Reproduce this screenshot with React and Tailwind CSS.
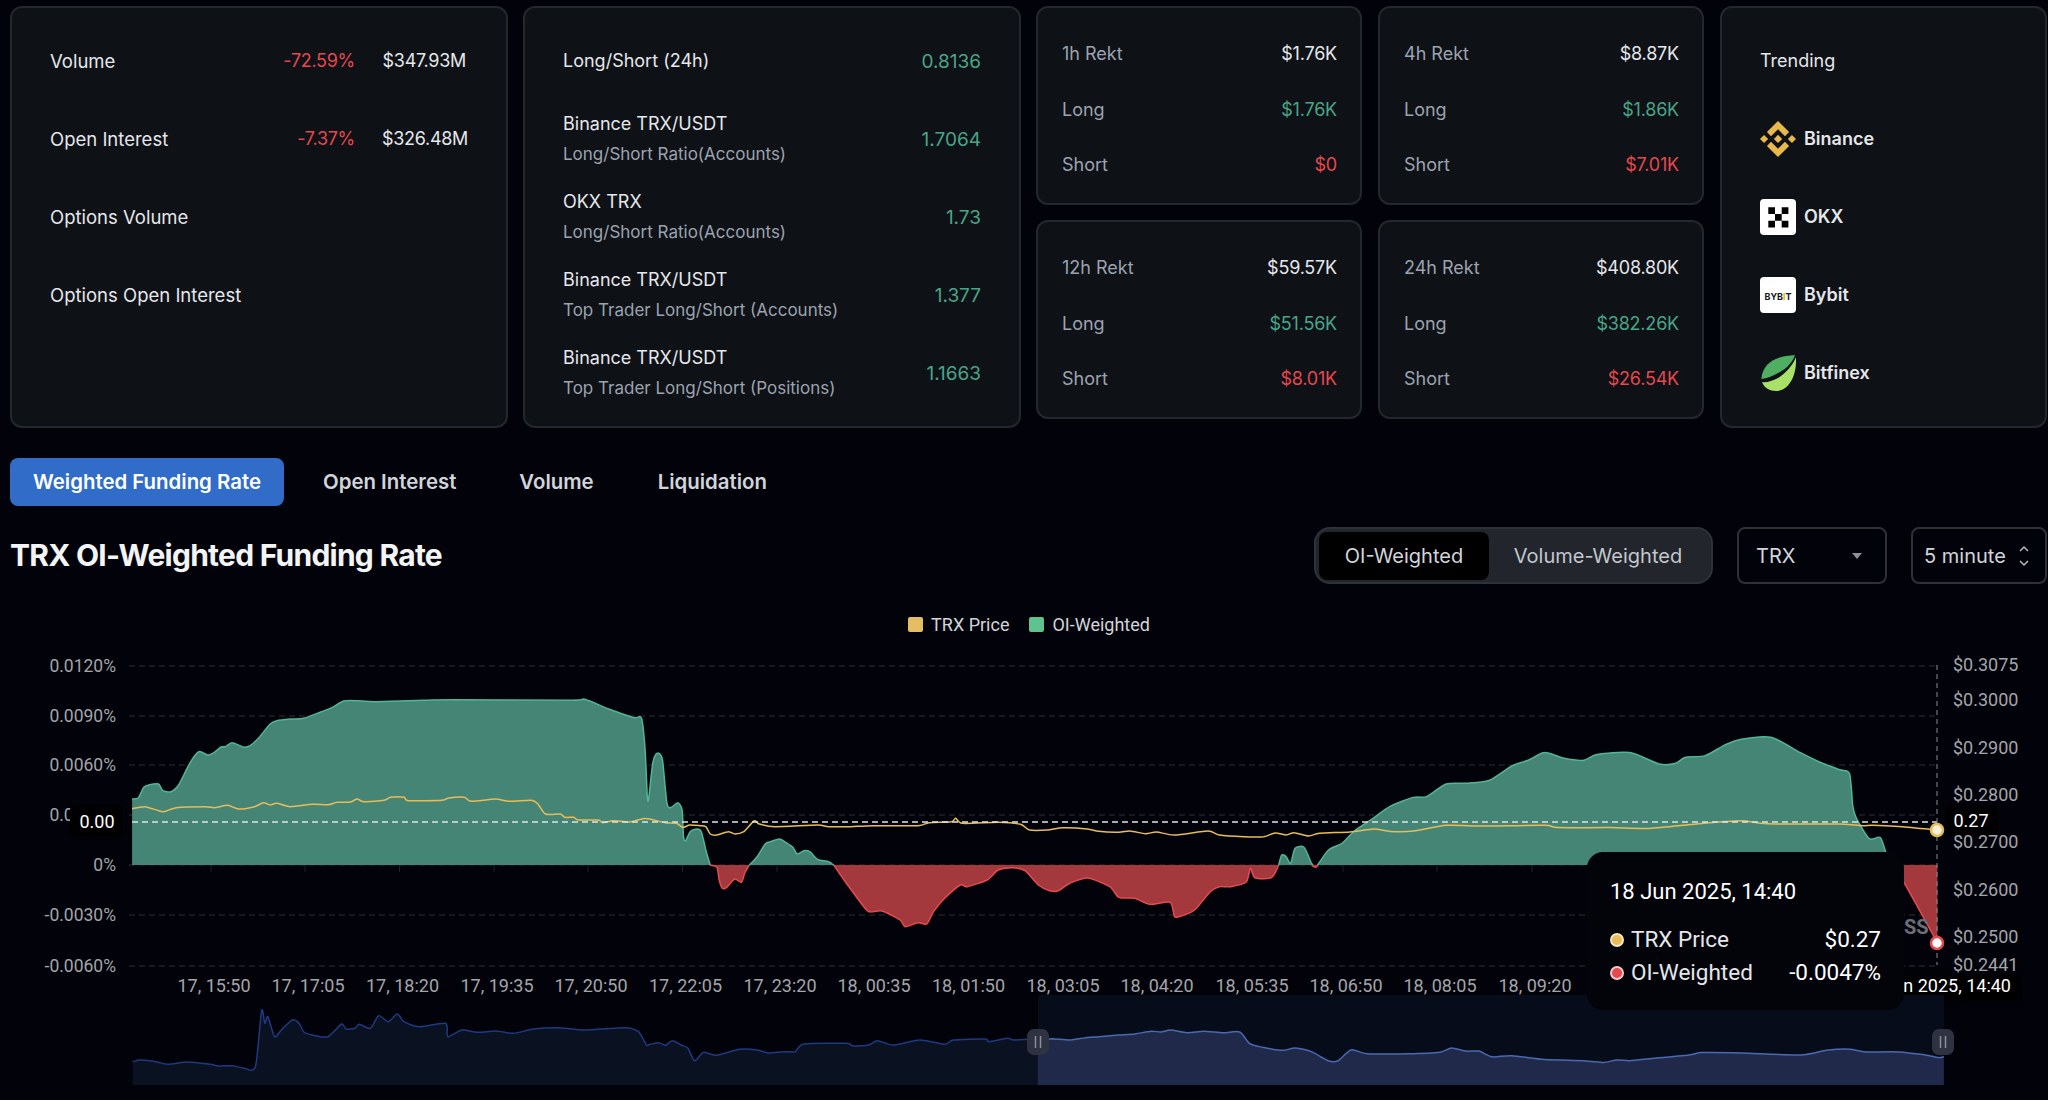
import React from "react";

const z5 = ([x, y]) => [x / 2.24, 650 + y / 3];
const z6 = ([x, y]) => [650 + x / 2.24, 650 + y / 3];
const z4 = ([x, y]) => [1020 + x / 1.525, 500 + y / 2.613];

const smooth = (pts) => {
  let d = `M${pts[0][0].toFixed(1)} ${pts[0][1].toFixed(1)}`;
  for (let i = 0; i < pts.length - 1; i++) {
    const p0 = pts[i - 1] || pts[i];
    const p1 = pts[i];
    const p2 = pts[i + 1];
    const p3 = pts[i + 2] || p2;
    const c1x = p1[0] + (p2[0] - p0[0]) / 8;
    const c1y = p1[1] + (p2[1] - p0[1]) / 8;
    const c2x = p2[0] - (p3[0] - p1[0]) / 8;
    const c2y = p2[1] - (p3[1] - p1[1]) / 8;
    d += `C${c1x.toFixed(1)} ${c1y.toFixed(1)} ${c2x.toFixed(1)} ${c2y.toFixed(1)} ${p2[0].toFixed(1)} ${p2[1].toFixed(1)}`;
  }
  return d;
};

const area = (pts, base) => `${smooth(pts)}L${pts[pts.length - 1][0].toFixed(1)} ${base}L${pts[0][0].toFixed(1)} ${base}Z`;

const green1 = [
  ...[[296,447],[310,443],[322,412],[335,404],[355,402],[365,422],[383,425],[400,405],[425,340],[445,305],[465,315],[480,307],[495,291],[505,290],[520,278],[545,291],[560,287],[580,263],[605,222],[620,212],[650,207],[680,205],[720,185],[745,172],[770,153],[800,152],[840,155],[950,151],[1015,149],[1280,151],[1310,148],[1365,178],[1420,203],[1437,205],[1445,300],[1450,440],[1453,445]].map(z5),
  ...[[6,340],[12,315],[20,310],[28,330],[38,460],[48,472],[62,458],[72,480],[75,560],[80,572],[90,545],[105,537],[115,545],[125,600],[135,646]].map(z6),
];
const red1 = [[135,646],[150,652],[155,690],[162,715],[172,712],[190,687],[205,697],[212,670],[222,646]].map(z6);
const green2 = [[222,646],[240,620],[258,582],[270,575],[290,567],[305,578],[320,592],[330,612],[345,602],[358,605],[375,628],[400,635],[412,646]].map(z6);
const red2 = [[412,646],[440,700],[485,780],[500,785],[520,783],[560,810],[572,830],[600,818],[620,822],[635,785],[660,745],[695,705],[710,710],[755,690],[780,660],[812,653],[840,662],[870,705],[895,722],[915,722],[940,700],[980,684],[1030,710],[1050,742],[1085,745],[1120,763],[1165,757],[1175,800],[1190,798],[1220,780],[1255,725],[1275,710],[1300,710],[1335,697],[1345,655],[1355,683],[1392,683],[1408,646]].map(z6);
const green3 = [[1408,646],[1415,615],[1425,620],[1435,640],[1445,595],[1465,592],[1480,635],[1485,646]].map(z6);
const red4 = [[1482,646],[1490,652],[1497,646]].map(z6);
const green4 = [
  ...[[1495,646],[1520,600],[1550,580]].map(z6),
  ...[[510,865],[540,830],[565,800],[600,777],[620,775],[650,742],[680,740],[715,733],[750,695],[775,680],[800,660],[830,675],[860,680],[880,665],[930,660],[975,690],[1000,688],[1015,672],[1045,668],[1075,640],[1100,625],[1145,620],[1190,660],[1220,685],[1250,705],[1265,715],[1270,800],[1275,830],[1295,885],[1312,882],[1322,930],[1328,955]].map(z4),
];
const red3 = [[1330,955],[1350,1005],[1399,1157]].map(z4);

const price = [
  ...[[296,476],[325,470],[365,485],[395,473],[460,470],[480,473],[510,466],[535,477],[570,470],[590,458],[605,465],[620,460],[650,470],[700,463],[735,464],[755,457],[785,456],[800,447],[815,455],[860,451],[875,442],[905,442],[915,452],[990,451],[1005,444],[1040,442],[1055,454],[1110,447],[1140,454],[1190,451],[1205,462],[1222,492],[1255,492],[1265,502],[1285,502],[1295,510],[1340,510],[1350,518],[1375,512],[1410,516],[1440,506],[1455,507],[1490,518],[1515,520],[1530,532],[1545,525],[1568,527]].map(z5),
  ...[[125,530],[135,552],[150,555],[175,545],[190,552],[210,545],[233,513],[245,522],[280,530],[375,525],[400,530],[450,530],[500,527],[600,527],[625,518],[675,515],[685,505],[700,520],[780,517],[830,523],[850,540],[890,540],[925,533],[980,537],[1005,544],[1050,547],[1075,543],[1110,551],[1135,546],[1175,555],[1250,543],[1275,555],[1330,560],[1375,560],[1400,549],[1425,555],[1443,548],[1475,558],[1500,550],[1568,546]].map(z6),
  ...[[540,860],[565,866],[600,865],[650,850],[700,852],[800,850],[820,856],[900,856],[960,858],[1040,845],[1100,838],[1140,846],[1250,847],[1285,851],[1300,850],[1340,853],[1399,862]].map(z4),
];

const miniLeft = [
  ...[[297,1235],[315,1230],[350,1235],[375,1243],[420,1236],[470,1243],[490,1248],[520,1247],[545,1254],[572,1250],[586,1082],[593,1120],[600,1100],[615,1160],[630,1140],[655,1110],[670,1120],[680,1145],[700,1155],[735,1160],[765,1122],[775,1137],[795,1135],[805,1123],[830,1135],[848,1097],[870,1115],[890,1092],[905,1115],[940,1130],[998,1120],[1003,1160],[1035,1140],[1070,1147],[1110,1143],[1150,1150],[1195,1137],[1250,1133],[1310,1140],[1400,1133],[1430,1145],[1448,1185]].map(z5),
  ...[[0,1183],[20,1178],[35,1186],[50,1172],[70,1185],[85,1195],[100,1232],[120,1207],[148,1216],[200,1198],[240,1200],[265,1209],[300,1205],[325,1205],[345,1182],[440,1180],[455,1188],[490,1185],[510,1172],[545,1185],[605,1170],[660,1183],[680,1170],[750,1167],[760,1175],[800,1165],[815,1170],[850,1168],[869,1168]].map(z6),
];
const miniRight = [[27,1410],[50,1408],[75,1411],[100,1405],[125,1402],[150,1398],[175,1395],[200,1388],[215,1390],[230,1385],[255,1392],[280,1388],[310,1392],[335,1390],[350,1420],[370,1430],[400,1438],[420,1432],[445,1442],[470,1465],[485,1465],[505,1437],[530,1447],[590,1447],[640,1443],[658,1432],[680,1440],[700,1440],[720,1455],[750,1452],[800,1462],[860,1465],[890,1470],[910,1463],[930,1465],[960,1460],[1020,1450],[1040,1444],[1100,1445],[1190,1450],[1230,1438],[1265,1435],[1290,1442],[1340,1442],[1380,1450],[1400,1457],[1409,1455]].map(z4);

const leftAxis = [["0.0120%", 666], ["0.0090%", 716], ["0.0060%", 765], ["0.0030%", 815], ["0%", 865], ["-0.0030%", 915], ["-0.0060%", 966]];
const rightAxis = [["$0.3075", 665], ["$0.3000", 700], ["$0.2900", 748], ["$0.2800", 795], ["$0.2700", 842], ["$0.2600", 890], ["$0.2500", 937], ["$0.2441", 965]];
const timeLabels = [["17, 15:50", 214], ["17, 17:05", 308], ["17, 18:20", 402.5], ["17, 19:35", 497], ["17, 20:50", 591], ["17, 22:05", 685.5], ["17, 23:20", 780], ["18, 00:35", 874], ["18, 01:50", 968.5], ["18, 03:05", 1063], ["18, 04:20", 1157], ["18, 05:35", 1252], ["18, 06:50", 1346], ["18, 08:05", 1440], ["18, 09:20", 1535]];

const Card = ({ className, children }) => (
  <div className={`rounded-xl border-2 border-[#23272e] bg-[#0e1116] ${className}`}>{children}</div>
);

const Row = ({ label, pct, value }) => (
  <div className="flex h-[78px] items-center justify-between">
    <span className="text-[18.5px] leading-6 text-[#e5e7eb]">{label}</span>
    <div className="flex gap-[27px] leading-6 tracking-[-0.3px]">
      {pct && <span className="text-[#e5484d]">{pct}</span>}
      {value && <span className="w-[84px] text-right text-[#e5e7eb]">{value}</span>}
    </div>
  </div>
);

const RatioRow = ({ title, sub, value }) => (
  <div className="flex h-[78px] items-center justify-between">
    <div className="flex flex-col gap-[6px]">
      <span className="leading-6 text-[#e5e7eb]">{title}</span>
      {sub && <span className="text-[17px] leading-6 text-[#9ca3af]">{sub}</span>}
    </div>
    <span className="mt-[3px] text-[19px] text-[#4aa587]">{value}</span>
  </div>
);

const RektCard = ({ title, total, long, short }) => (
  <Card className="h-[199px] pl-6 pr-[23px] pt-[18px]">
    {[
      [title, total, "text-[#9ca3af]", "text-[#e5e7eb]"],
      ["Long", long, "text-[#9ca3af]", "text-[#4aa587]"],
      ["Short", short, "text-[#9ca3af]", "text-[#e5484d]"],
    ].map(([a, b, ca, cb]) => (
      <div key={a} className="flex h-[55.5px] items-center justify-between">
        <span className={ca}>{a}</span>
        <span className={`tracking-[-0.2px] ${cb}`}>{b}</span>
      </div>
    ))}
  </Card>
);

const BinanceLogo = () => (
  <svg width="36" height="36" viewBox="0 0 126.61 126.61" fill="#e8b84a">
    <path d="M38.73 53.2l24.59-24.58 24.6 24.6 14.3-14.31L63.32 0 24.42 38.9l14.31 14.3zM0 63.31l14.3-14.31 14.31 14.31-14.31 14.3zM38.73 73.41l24.59 24.59 24.6-24.6 14.31 14.29-38.9 38.91-38.91-38.88-.02-.02zM98 63.31l14.3-14.31 14.31 14.3-14.31 14.32z" />
    <path d="M77.83 63.3L63.32 48.78 52.59 59.51l-1.24 1.23-2.54 2.54 14.51 14.5 14.51-14.47z" />
  </svg>
);

const OkxLogo = () => (
  <svg width="36" height="36" viewBox="0 0 36 36">
    <rect width="36" height="36" rx="4" fill="#fff" />
    <path d="M8.3 8.3h6.7V15H8.3zM21.7 8.3h6.7V15h-6.7zM15 15h6.7v6.7H15zM8.3 21.7h6.7v6.7H8.3zM21.7 21.7h6.7v6.7h-6.7z" fill="#000" />
  </svg>
);

const BybitLogo = () => (
  <svg width="36" height="36" viewBox="0 0 36 36">
    <rect width="36" height="36" rx="4" fill="#fff" />
    <text x="18" y="23" textAnchor="middle" fontSize="9" fontWeight="700" fontFamily="Inter, sans-serif" fill="#15171c">
      BYB<tspan fill="#f7a600">I</tspan>T
    </text>
  </svg>
);

const BitfinexLogo = () => (
  <svg width="36" height="36" viewBox="0 0 36 36">
    <path d="M35 0C20 1 3 5 1.3 24C9 23 20 18 27 12C31 8 34 4 35 0Z" fill="#4fae62" />
    <path d="M36 2C33 10 26 18 18 23C12 26 6 28 2 27C4 33 10 36 16 36C28 36 37 22 36 2Z" fill="#a8e068" />
  </svg>
);

const Chart = () => (
  <svg className="block" width="2048" height="460" viewBox="0 640 2048 460" fontFamily="Roboto, sans-serif">
    {leftAxis.map(([, y]) => (
      <line key={y} x1="129" x2="1938" y1={y} y2={y} stroke="#202226" strokeWidth="1.5" strokeDasharray="6 4" />
    ))}
    {timeLabels.map(([, x]) => (
      <line key={x} x1={x - 3} x2={x - 3} y1="865" y2="872" stroke="#1e2024" strokeWidth="1" />
    ))}

    {[green1, green2, green3, green4].map((p, i) => (
      <g key={i}>
        <path d={area(p, 865)} fill="#458576" />
        <path d={smooth(p)} fill="none" stroke="#52b595" strokeWidth="1.5" />
      </g>
    ))}
    {[red1, red2, red4, red3].map((p, i) => (
      <g key={i}>
        <path d={area(p, 865)} fill="#a3383d" />
        <path d={smooth(p)} fill="none" stroke="#e8494f" strokeWidth="1.5" />
      </g>
    ))}
    <path d={smooth(price)} fill="none" stroke="#e8bd58" strokeWidth="1.5" />

    <line x1="132" x2="1937" y1="822" y2="822" stroke="#dfe3e8" strokeWidth="1.5" strokeDasharray="6 4" />
    <line x1="1937" x2="1937" y1="665" y2="965" stroke="#8a8d93" strokeWidth="1" strokeDasharray="5 4" />

    {leftAxis.map(([t, y]) => (
      <text key={t} x="116" y={y + 6} textAnchor="end" fontSize="17.5" fill="#a3a5a9">{t}</text>
    ))}
    {rightAxis.map(([t, y]) => (
      <text key={t} x="1953" y={y + 6} fontSize="18" fill="#a3a5a9">{t}</text>
    ))}
    {timeLabels.map(([t, x]) => (
      <text key={t} x={x} y="992" textAnchor="middle" fontSize="18" fill="#a3a5a9">{t}</text>
    ))}

    <rect x="70" y="805" width="53" height="32" rx="5" fill="#000" />
    <text x="97" y="828" textAnchor="middle" fontSize="18" fill="#fff">0.00</text>
    <rect x="1945" y="806" width="53" height="29" rx="4" fill="#000" />
    <text x="1971" y="827" textAnchor="middle" fontSize="18" fill="#fff">0.27</text>
    <rect x="1870" y="975" width="152" height="26" fill="#000" />
    <text x="2011" y="992" textAnchor="end" fontSize="18" fill="#fff">18 Jun 2025, 14:40</text>
    <text x="1904" y="934" fontSize="20" fontWeight="700" fill="#6b7078">SS</text>

    <circle cx="1937" cy="830" r="6" fill="#fbf3d9" stroke="#e8bd58" strokeWidth="2.5" />
    <circle cx="1937" cy="943" r="6" fill="#fff" stroke="#e5484d" strokeWidth="2.5" />

    <path d={area(miniLeft, 1085)} fill="#0a1120" />
    <path d={smooth(miniLeft)} fill="none" stroke="#1f3a80" strokeWidth="1.5" />
    <rect x="1038" y="995" width="906" height="90" fill="#070c1a" />
    <path d={area(miniRight, 1085)} fill="#20294a" />
    <path d={smooth(miniRight)} fill="none" stroke="#4a69b0" strokeWidth="1.5" />
    {[1038, 1943].map((x) => (
      <g key={x}>
        <rect x={x - 11} y="1029" width="22" height="26" rx="7" fill="#2f3240" />
        <line x1={x - 2.5} x2={x - 2.5} y1="1036" y2="1048" stroke="#8a8f9c" strokeWidth="1.5" />
        <line x1={x + 2.5} x2={x + 2.5} y1="1036" y2="1048" stroke="#8a8f9c" strokeWidth="1.5" />
      </g>
    ))}
  </svg>
);

const Tooltip = () => (
  <div className="absolute left-[1587px] top-[212px] h-[158px] w-[317px] rounded-2xl bg-[#03040a] px-[23px] pt-[26px] font-['Roboto',sans-serif] text-[22.5px] text-[#e5e7eb]">
    <div className="text-[22px] leading-7 text-white">18 Jun 2025, 14:40</div>
    <div className="mt-5 flex h-7 items-center justify-between">
      <span className="flex items-center gap-[7px]">
        <span className="h-[14px] w-[14px] rounded-full border-2 border-[#f3e6bd] bg-[#e8bd58]"></span>
        TRX Price
      </span>
      <span className="text-white">$0.27</span>
    </div>
    <div className="mt-[5px] flex h-7 items-center justify-between">
      <span className="flex items-center gap-[7px]">
        <span className="h-[14px] w-[14px] rounded-full border-2 border-[#f3c6c8] bg-[#e5484d]"></span>
        OI-Weighted
      </span>
      <span className="text-white">-0.0047%</span>
    </div>
  </div>
);

const App = () => {
  return (
    <div className="h-[1100px] w-[2048px] overflow-hidden bg-[#02030a] font-['Inter',sans-serif] text-[18px]">
      {/* top cards */}
      <div className="flex items-start gap-4 pl-2.5 pt-1.5">
        <Card className="h-[422px] w-[498px] pl-[38px] pr-[40px] py-[14px]">
          <Row label="Volume" pct="-72.59%" value="$347.93M" />
          <Row label="Open Interest" pct="-7.37%" value="$326.48M" />
          <Row label="Options Volume" />
          <Row label="Options Open Interest" />
        </Card>

        <Card className="-ml-px h-[422px] w-[498px] px-[38px] py-[14px]">
          <RatioRow title="Long/Short (24h)" value="0.8136" />
          <RatioRow title="Binance TRX/USDT" sub="Long/Short Ratio(Accounts)" value="1.7064" />
          <RatioRow title="OKX TRX" sub="Long/Short Ratio(Accounts)" value="1.73" />
          <RatioRow title="Binance TRX/USDT" sub="Top Trader Long/Short (Accounts)" value="1.377" />
          <RatioRow title="Binance TRX/USDT" sub="Top Trader Long/Short (Positions)" value="1.1663" />
        </Card>

        <div className="-ml-px grid w-[668px] grid-cols-2 gap-x-4 gap-y-[15px]">
          <RektCard title="1h Rekt" total="$1.76K" long="$1.76K" short="$0" />
          <RektCard title="4h Rekt" total="$8.87K" long="$1.86K" short="$7.01K" />
          <RektCard title="12h Rekt" total="$59.57K" long="$51.56K" short="$8.01K" />
          <RektCard title="24h Rekt" total="$408.80K" long="$382.26K" short="$26.54K" />
        </div>

        <Card className="h-[422px] w-[327px] px-[38px] py-[14px]">
          <div className="flex h-[78px] items-center leading-6 text-[#e5e7eb]">Trending</div>
          {[
            ["Binance", <BinanceLogo />],
            ["OKX", <OkxLogo />],
            ["Bybit", <BybitLogo />],
            ["Bitfinex", <BitfinexLogo />],
          ].map(([name, logo]) => (
            <div key={name} className="flex h-[78px] items-center gap-2 font-semibold leading-6 text-[#e5e7eb]">
              {logo}
              {name}
            </div>
          ))}
        </Card>
      </div>

      {/* tabs */}
      <div className="mt-[30px] flex items-center pl-2.5 text-[20.4px] font-semibold leading-6 text-[#d1d5db]">
        <button className="h-[48px] w-[274px] rounded-lg bg-[#306cc8] text-white">Weighted Funding Rate</button>
        <button className="ml-[39px]">Open Interest</button>
        <button className="ml-[63px]">Volume</button>
        <button className="ml-[64px]">Liquidation</button>
      </div>

      {/* title + controls */}
      <div className="mt-[21px] flex h-[57px] items-center pl-2.5 pr-px">
        <h1 className="text-[30px] font-bold tracking-[-0.75px] text-[#f3f4f6]">TRX OI-Weighted Funding Rate</h1>
        <div className="ml-auto flex items-center text-[20px] text-[#d1d5db]">
          <div className="flex h-[57px] w-[399px] items-center rounded-2xl border-2 border-[#2d3139] bg-[#22252c] pl-[3px]">
            <div className="flex h-[48px] w-[170px] items-center justify-center rounded-lg bg-black">OI-Weighted</div>
            <div className="flex-1 pr-1 text-center text-[#c3c7ce]">Volume-Weighted</div>
          </div>
          <div className="ml-6 flex h-[57px] w-[150px] items-center justify-between rounded-lg border-2 border-[#2d3139] pl-[17px] pr-[23px]">
            TRX
            <svg width="10" height="6" viewBox="0 0 10 6"><path d="M0 0h10L5 6z" fill="#8b8f96" /></svg>
          </div>
          <div className="ml-6 flex h-[57px] w-[136px] items-center justify-between rounded-lg border-2 border-[#2d3139] pl-[11px] pr-[16px]">
            5 minute
            <svg width="10" height="22" viewBox="0 0 10 22" fill="none" stroke="#b4b8bf" strokeWidth="1.5">
              <path d="M1 6l4-4 4 4M1 16l4 4 4-4" />
            </svg>
          </div>
        </div>
      </div>

      {/* legend */}
      <div className="mt-[32px] flex h-4 items-center justify-center gap-2 pl-2.5 font-['Roboto',sans-serif] text-[18px] text-[#d1d5db]">
        <span className="h-[15px] w-[15px] rounded-[2px] bg-[#e5bd62]"></span>
        <span>TRX Price</span>
        <span className="ml-3 h-[15px] w-[15px] rounded-[2px] bg-[#5ec48f]"></span>
        <span>OI-Weighted</span>
      </div>

      {/* chart */}
      <div className="relative mt-2">
        <Chart />
        <Tooltip />
      </div>
    </div>
  );
};

export default App;
